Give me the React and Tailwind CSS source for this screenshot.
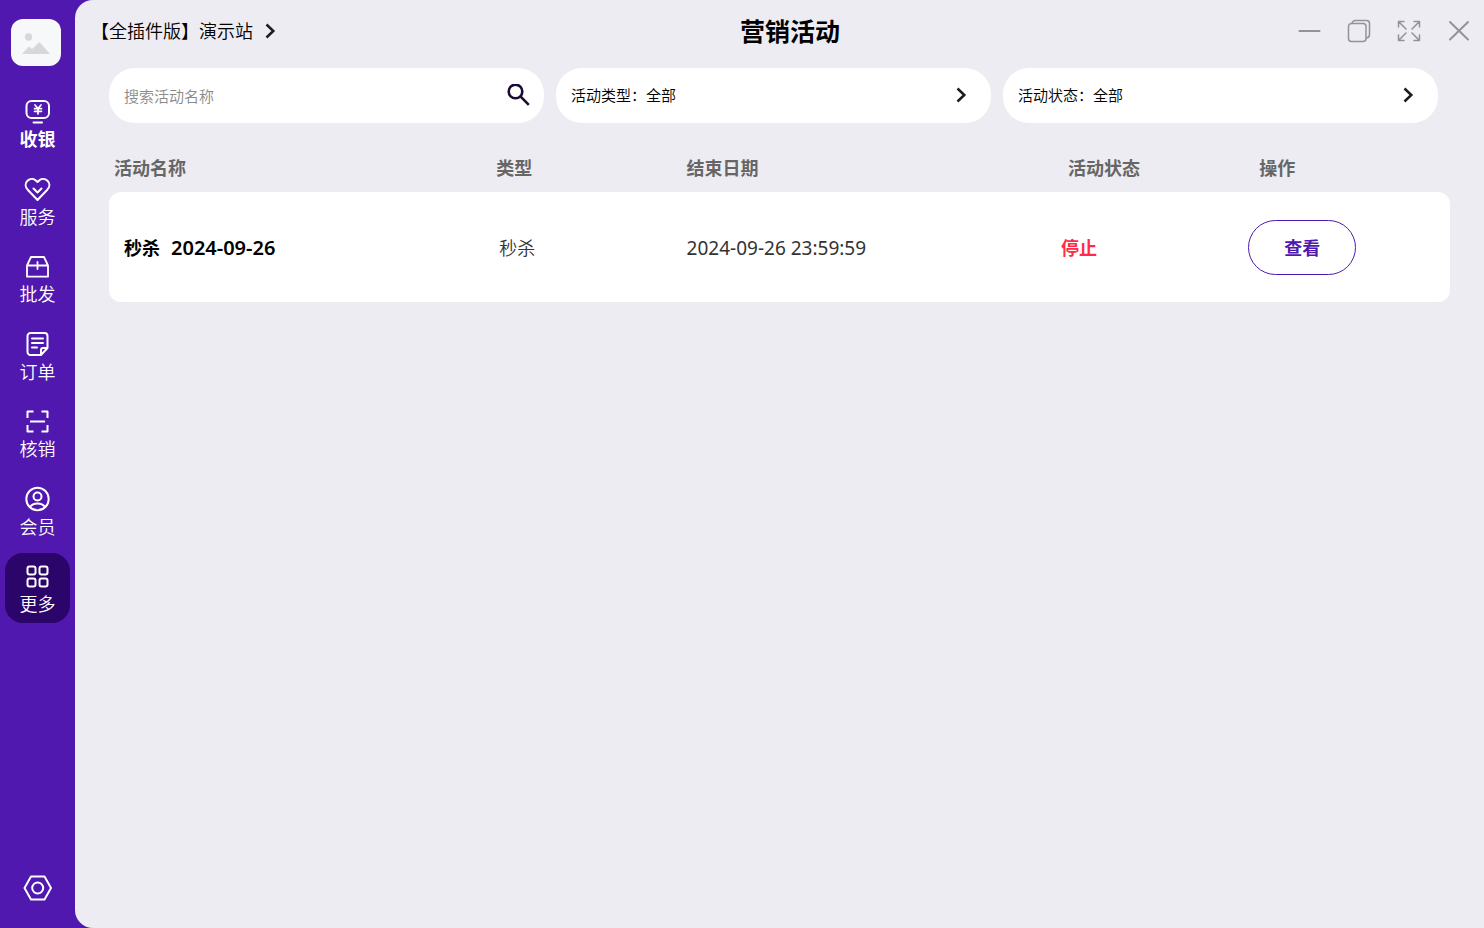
import React from "react";

const stroke = {
  fill: "none",
  stroke: "currentColor",
  strokeWidth: 2,
  strokeLinejoin: "round",
  strokeLinecap: "round",
};

function Icon({ children, ...props }) {
  return (
    <svg viewBox="0 0 28 28" className="h-7 w-7 shrink-0" aria-hidden="true" {...stroke} {...props}>
      {children}
    </svg>
  );
}

const navItems = [
  {
    label: "收银",
    bold: true,
    icon: (
      <Icon>
        <rect x="2.500" y="4" width="22.500" height="17" rx="5" />
        <path d="M9.500 25.500h8.500" />
        <path d="M11 8l3 3.500l3-3.500M14 11.500v5.500M10.500 11.700h7M10.500 14.300h7" strokeWidth="1.700" />
      </Icon>
    ),
  },
  {
    label: "服务",
    icon: (
      <Icon>
        <path d="M13.500 25L3.700 14.700C1 11.700 1 8 3.500 5.700C6 3.400 9.500 3.500 11.500 5.200L13.500 7L15.500 5.200C17.500 3.500 21 3.400 23.500 5.700C26 8 26 11.700 23.300 14.700Z" />
        <path d="M9.500 13.500l4 4l4-4" />
      </Icon>
    ),
  },
  {
    label: "批发",
    icon: (
      <Icon strokeWidth="1.800">
        <path d="M3 13.500L7 5h13L24 13.500v11.200H3zM3 13.500h21M13.500 10v7" />
      </Icon>
    ),
  },
  {
    label: "订单",
    icon: (
      <Icon>
        <path d="M23.500 18V6a3 3 0 0 0-3-3H6.500a3 3 0 0 0-3 3v16a3 3 0 0 0 3 3h10.500zM17 25v-5a2 2 0 0 1 2-2h4.500M8 8.500h11M8 13h11M8 17.500h5" />
      </Icon>
    ),
  },
  {
    label: "核销",
    icon: (
      <Icon strokeLinecap="butt">
        <path d="M3.500 11V4.500h6M17.500 4.500h6V11M23.500 18v6.500h-6M9.500 24.500h-6V18M6 14.500h15" />
      </Icon>
    ),
  },
  {
    label: "会员",
    icon: (
      <Icon>
        <circle cx="13.500" cy="14" r="11.200" />
        <circle cx="13.500" cy="11.500" r="4" />
        <path d="M6 22c1.700-2.500 4.400-3.500 7.500-3.500s5.800 1 7.500 3.500" />
      </Icon>
    ),
  },
  {
    label: "更多",
    active: true,
    icon: (
      <Icon>
        <rect x="3.500" y="4.500" width="8" height="8" rx="2" />
        <rect x="15.500" y="4.500" width="8" height="8" rx="2" />
        <rect x="3.500" y="16.500" width="8" height="8" rx="2" />
        <rect x="15.500" y="16.500" width="8" height="8" rx="2" />
      </Icon>
    ),
  },
];

function Chevron() {
  return (
    <svg viewBox="0 0 12 16" className="h-4 w-3 shrink-0" aria-hidden="true">
      <path d="M1.500 1.500L8.300 8L1.500 14.500" fill="none" stroke="#1c1c1c" strokeWidth="2.500" />
    </svg>
  );
}

function Sidebar() {
  return (
    <aside className="flex w-[75px] shrink-0 flex-col items-center bg-[#5018ae] pt-[19px] pb-6 text-white">
      <a href="#home" aria-label="首页" className="-ml-1 flex h-[47px] w-[50px] items-center justify-center rounded-xl bg-[#f7f8fa]">
        <svg viewBox="0 0 30 24" className="h-6 w-[30px]" fill="#d6d8dc" aria-hidden="true">
          <circle cx="7.500" cy="6" r="3.700" />
          <path d="M1 23L8 15.500L11 18L18.500 11L29 23Z" />
        </svg>
      </a>
      <nav className="mt-[22px] flex h-[535px] flex-col justify-between">
        {navItems.map((item) => (
          <a
            key={item.label}
            href={"#" + item.label}
            className={
              "flex h-[70px] w-[65px] flex-col items-center rounded-[18px] pt-[9px] text-[18px] leading-[28px] " +
              (item.active ? "bg-[#2c056b] " : "") +
              (item.bold ? "font-bold" : "font-[350]")
            }
          >
            {item.icon}
            {item.label}
          </a>
        ))}
      </nav>
      <button type="button" aria-label="设置" className="mt-auto">
        <svg viewBox="0 0 32 32" className="h-8 w-8" aria-hidden="true" {...stroke}>
          <path d="M9 4.500h13.500L29 16L22.500 27.500H9L2.500 16Z" />
          <circle cx="15.700" cy="16" r="5.500" />
        </svg>
      </button>
    </aside>
  );
}

function WindowControls() {
  return (
    <div className="flex items-center justify-end gap-[26px] text-[#929298]">
      <button type="button" aria-label="最小化">
        <svg viewBox="0 0 24 24" className="h-6 w-6" {...stroke}>
          <path d="M2.500 12h20" />
        </svg>
      </button>
      <button type="button" aria-label="还原">
        <svg viewBox="0 0 24 24" className="h-6 w-6" {...stroke} strokeWidth="1.500">
          <rect x="1.500" y="4.500" width="17.500" height="18" rx="3" />
          <path d="M5 4.500Q5.500 1.500 8.500 1.500h11a3 3 0 0 1 3 3v11q0 3-3 3.500" />
        </svg>
      </button>
      <button type="button" aria-label="全屏">
        <svg viewBox="0 0 24 24" className="h-6 w-6" {...stroke} strokeWidth="1.500">
          <path d="M1.500 8V2.500H7M1.500 2.500l7.500 7.500M17 2.500h5.500V8M22.500 2.500l-7.500 7.500M1.500 16V21.500H7M1.500 21.500l7.500-7.500M17 21.500h5.500V16M22.500 21.500l-7.500-7.500" />
        </svg>
      </button>
      <button type="button" aria-label="关闭">
        <svg viewBox="0 0 24 24" className="h-6 w-6" {...stroke} strokeWidth="2">
          <path d="M3 3l18 17.500M21 3L3 20.500" />
        </svg>
      </button>
    </div>
  );
}

function FilterSelect({ label }) {
  return (
    <div className="flex h-[55px] items-center rounded-[26px] bg-white pr-[23px] pb-px pl-[15px]">
      <select
        aria-label={label}
        className="min-w-0 flex-1 appearance-none bg-transparent text-[15px] leading-6 font-[350] text-black outline-none"
      >
        <option>{label}：全部</option>
      </select>
      <Chevron />
    </div>
  );
}

export default function App() {
  return (
    <div className="flex min-h-screen bg-[#5018ae] font-['Noto_Sans','Noto_Sans_CJK_SC',sans-serif] text-black">
      <Sidebar />
      <main className="min-w-0 flex-1 rounded-l-[18px] bg-[#edecf2]">
        <header className="grid h-[62px] grid-cols-3 items-center pr-[13px] pl-[34px]">
          <button type="button" className="-ml-[18px] flex items-center gap-3 text-[18px] leading-7 font-[350]">
            【全插件版】演示站
            <Chevron />
          </button>
          <h1 className="text-center text-[25px] leading-9 font-bold">营销活动</h1>
          <WindowControls />
        </header>

        <div className="px-[34px] pt-[6px]">
          <form className="grid grid-cols-3 gap-3 pr-3">
            <div className="flex h-[55px] items-center rounded-[26px] bg-white pr-[13px] pl-[15px]">
              <input
                type="search"
                aria-label="搜索活动名称"
                placeholder="搜索活动名称"
                className="min-w-0 flex-1 bg-transparent text-[15px] leading-6 font-[350] outline-none placeholder:text-[#8a8a8a]"
              />
              <button type="submit" aria-label="搜索">
                <svg viewBox="0 0 24 24" className="h-6 w-6" fill="none" stroke="#1c0a35" strokeWidth="2.600" aria-hidden="true">
                  <circle cx="8.500" cy="7.500" r="6.800" />
                  <path d="M13.200 12.200L21.800 20.800" />
                </svg>
              </button>
            </div>
            <FilterSelect label="活动类型" />
            <FilterSelect label="活动状态" />
          </form>

          <table className="mt-[21px] w-full table-fixed border-separate border-spacing-0 text-left text-[18px] leading-7">
            <colgroup>
              <col className="w-[28.5%]" />
              <col className="w-[14.2%]" />
              <col className="w-[28%]" />
              <col className="w-[14.1%]" />
              <col />
            </colgroup>
            <thead className="text-[#666666]">
              <tr className="h-12">
                <th className="pl-[5px] font-bold">活动名称</th>
                <th className="pl-[5px] font-bold">类型</th>
                <th className="pl-[5px] font-bold">结束日期</th>
                <th className="pl-[11px] font-bold">活动状态</th>
                <th className="pl-[13px] font-bold">操作</th>
              </tr>
            </thead>
            <tbody>
              <tr className="h-[110px] bg-white font-[350] text-[#333333]">
                <td className="rounded-l-xl pt-[2px] pl-[15px] font-bold text-black">
                  <span className="flex items-center gap-[11px]">
                    <span>秒杀</span>
                    <span className="text-[20px] font-semibold">2024-09-26</span>
                  </span>
                </td>
                <td className="pt-[2px] pl-2">秒杀</td>
                <td className="pt-[2px] pl-[5px] text-[19px] font-normal">2024-09-26 23:59:59</td>
                <td className="pt-[2px] pl-1 font-bold text-[#ff2b48]">停止</td>
                <td className="rounded-r-xl pl-[2px]">
                  <button
                    type="button"
                    className="flex h-[55px] w-[108px] items-center justify-center rounded-full border border-[#5018ae] pt-[2px] font-bold text-[#5018ae]"
                  >
                    查看
                  </button>
                </td>
              </tr>
            </tbody>
          </table>
        </div>
      </main>
    </div>
  );
}
